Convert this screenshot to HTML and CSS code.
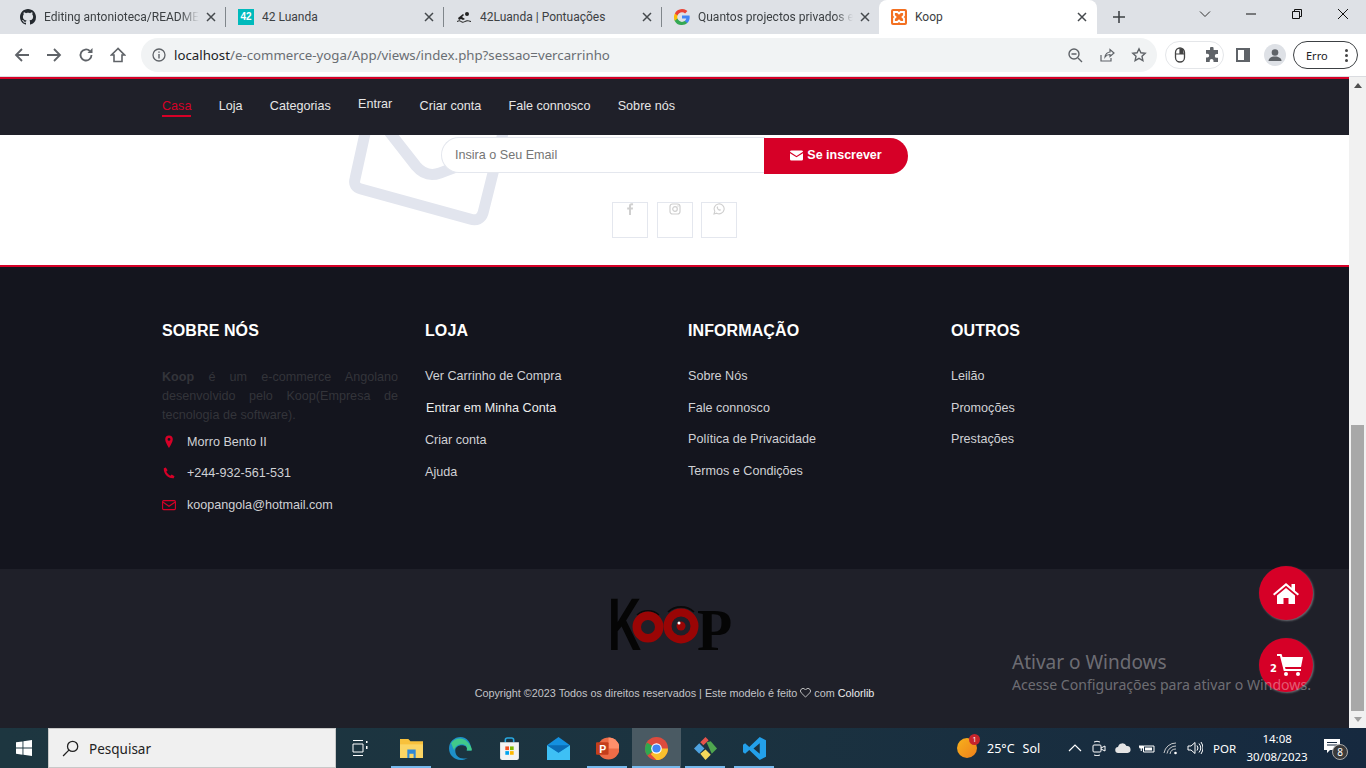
FILE: index.html
```html
<!DOCTYPE html>
<html lang="pt">
<head>
    <meta charset="UTF-8">
    <meta name="viewport" content="width=device-width, initial-scale=1.0">
    <title>Koop</title>
    <link rel="stylesheet" href="styles.css">
</head>
<body>
  <div id="tabstrip">
    <div class="tab">
      <svg class="favicon" viewBox="0 0 16 16"><path fill="#24292f" d="M8 0C3.58 0 0 3.58 0 8c0 3.54 2.29 6.53 5.47 7.59.4.07.55-.17.55-.38 0-.19-.01-.82-.01-1.49-2.01.37-2.53-.49-2.69-.94-.09-.23-.48-.94-.82-1.13-.28-.15-.68-.52-.01-.53.63-.01 1.08.58 1.23.82.72 1.21 1.87.87 2.33.66.07-.52.28-.87.51-1.07-1.78-.2-3.64-.89-3.64-3.95 0-.87.31-1.59.82-2.15-.08-.2-.36-1.02.08-2.12 0 0 .67-.21 2.2.82.64-.18 1.32-.27 2-.27.68 0 1.36.09 2 .27 1.53-1.04 2.2-.82 2.2-.82.44 1.1.16 1.92.08 2.12.51.56.82 1.27.82 2.15 0 3.07-1.87 3.75-3.65 3.95.29.25.54.73.54 1.48 0 1.07-.01 1.93-.01 2.2 0 .21.15.46.55.38A8.013 8.013 0 0016 8c0-4.42-3.58-8-8-8z"/></svg>
      <span class="tab-title fade">Editing antonioteca/README.md</span>
      <svg class="tab-close" viewBox="0 0 10 10"><path d="M1 1l8 8M9 1L1 9"/></svg>
    </div>
    <div class="tab">
      <span class="favicon icon-42">42</span>
      <span class="tab-title">42 Luanda</span>
      <svg class="tab-close" viewBox="0 0 10 10"><path d="M1 1l8 8M9 1L1 9"/></svg>
    </div>
    <div class="tab">
      <svg class="favicon" viewBox="0 0 16 16" fill="#222"><circle cx="11" cy="5" r="2"/><path d="M2 9l5-4 1 1-2 2 3 2-2 1-2-1-2 1zM1 12c2-1 3-1 4 0s3 1 4 0 3-1 6 0v1c-3-1-4-1-6 0s-3 1-4 0-2-1-4 0z"/></svg>
      <span class="tab-title">42Luanda | Pontuações</span>
      <svg class="tab-close" viewBox="0 0 10 10"><path d="M1 1l8 8M9 1L1 9"/></svg>
    </div>
    <div class="tab tab-last">
      <svg class="favicon" viewBox="0 0 16 16"><path fill="#4285f4" d="M15.7 8.2c0-.6-.1-1.100-.2-1.600H8v3h4.300a3.700 3.700 0 0 1-1.600 2.400v2h2.600c1.500-1.400 2.400-3.400 2.400-5.800z"/><path fill="#34a853" d="M8 16c2.200 0 4-.7 5.300-1.900l-2.600-2c-.7.500-1.600.8-2.700.8-2.100 0-3.800-1.400-4.500-3.300H.6v2.100A8 8 0 0 0 8 16z"/><path fill="#fbbc05" d="M3.500 9.600a4.800 4.800 0 0 1 0-3.100V4.400H.9a8 8 0 0 0 0 7.300z"/><path fill="#ea4335" d="M8 3.200c1.200 0 2.200.4 3.100 1.200l2.300-2.300A8 8 0 0 0 .9 4.400l2.600 2.100C4.200 4.600 5.900 3.200 8 3.200z"/></svg>
      <span class="tab-title fade">Quantos projectos privados e públicos</span>
      <svg class="tab-close" viewBox="0 0 10 10"><path d="M1 1l8 8M9 1L1 9"/></svg>
    </div>
    <div class="tab tab-active">
      <svg class="favicon" viewBox="0 0 16 16"><rect width="16" height="16" rx="2" fill="#f37021"/><path fill="none" stroke="#fff" stroke-width="1.800" d="M3 3h3.500L8 4.500 9.500 3H13v3.500L11.500 8 13 9.500V13H9.500L8 11.500 6.500 13H3V9.500L4.500 8 3 6.500z"/></svg>
      <span class="tab-title">Koop</span>
      <svg class="tab-close" viewBox="0 0 10 10"><path d="M1 1l8 8M9 1L1 9"/></svg>
    </div>
    <div class="new-tab">
      <svg class="new-tab-icon" viewBox="0 0 14 14"><path d="M7 0v14M0 7h14" stroke="#3c4043" stroke-width="1.800"/></svg>
    </div>
    <div class="window-btns">
      <svg class="win-btn" viewBox="0 0 12 12"><path d="M1 3.500l5 5 5-5" fill="none" stroke="#333"/></svg>
      <svg class="win-btn" viewBox="0 0 12 12"><path d="M1 6h10" stroke="#111"/></svg>
      <svg class="win-btn" viewBox="0 0 12 12"><path d="M1.500 3.500h7v7h-7zM3.500 3.500v-2h7v7h-2" fill="none" stroke="#111"/></svg>
      <svg class="win-btn" viewBox="0 0 12 12"><path d="M1 1l10 10M11 1L1 11" stroke="#111"/></svg>
    </div>
  </div>

  <div id="toolbar">
    <div class="nav-icons">
      <svg class="tool-icon" viewBox="0 0 16 16"><path d="M15 8H2M8 2L2 8l6 6" fill="none" stroke="#5f6368" stroke-width="1.800"/></svg>
      <svg class="tool-icon" viewBox="0 0 16 16"><path d="M1 8h13M8 2l6 6-6 6" fill="none" stroke="#5f6368" stroke-width="1.800"/></svg>
      <svg class="tool-icon" viewBox="0 0 16 16"><path d="M13.500 8a5.500 5.500 0 1 1-1.700-4" fill="none" stroke="#5f6368" stroke-width="1.800"/><path d="M14.500 1v5h-5z" fill="#5f6368"/></svg>
      <svg class="tool-icon" viewBox="0 0 16 16"><path d="M8 1.500L1.500 8H4v6.500h8V8h2.500z" fill="none" stroke="#5f6368" stroke-width="1.600"/></svg>
    </div>
    <div id="address-bar">
      <svg class="info-icon" viewBox="0 0 14 14"><circle cx="7" cy="7" r="6" fill="none" stroke="#5f6368" stroke-width="1.300"/><path d="M7 6v4.500M7 3.500v1.300" stroke="#5f6368" stroke-width="1.400"/></svg>
      <span class="url"><span class="url-host">localhost</span>/e-commerce-yoga/App/views/index.php?sessao=vercarrinho</span>
      <div class="address-icons">
        <svg class="tool-icon" viewBox="0 0 16 16"><circle cx="7" cy="7" r="5" fill="none" stroke="#5f6368" stroke-width="1.400"/><path d="M4.500 7h5M11 11l4 4" stroke="#5f6368" stroke-width="1.400"/></svg>
        <svg class="tool-icon" viewBox="0 0 16 16"><path d="M2 8v6h10v-3M6 10c0-3 3-5 5-5V2.500L15 6l-4 3.500V7.500C9 7.500 7 8.500 6 10z" fill="none" stroke="#5f6368" stroke-width="1.200"/></svg>
        <svg class="tool-icon" viewBox="0 0 16 16"><path d="M8 1.800l1.900 4 4.300.5-3.200 3 .9 4.300L8 11.400l-3.900 2.200.9-4.300-3.200-3 4.300-.5z" fill="none" stroke="#5f6368" stroke-width="1.400"/></svg>
      </div>
    </div>
    <div class="ext-pill">
      <svg class="tool-icon" viewBox="0 0 16 16"><rect x="3.500" y="1" width="9" height="14" rx="4.500" fill="none" stroke="#444" stroke-width="1.300"/><path d="M3.500 7h9M8 1v6" stroke="#444" stroke-width="1.200"/><rect x="8" y="2" width="3.500" height="5" fill="#444"/></svg>
      <svg class="tool-icon" viewBox="0 0 16 16"><path fill="#5f6368" d="M6 1.500a1.800 1.800 0 0 1 3.600 0V3H14v4h-1.300a1.900 1.900 0 0 0 0 3.800H14V15H9.500v-1.200a1.900 1.900 0 0 0-3.800 0V15H2v-4.500h1.300a1.900 1.900 0 0 0 0-3.800H2V3h4z"/></svg>
    </div>
    <svg class="panel-icon" viewBox="0 0 14 14"><rect x="1" y="1" width="12" height="12" fill="none" stroke="#5f6368" stroke-width="2"/><rect x="8" y="1" width="5" height="12" fill="#5f6368"/></svg>
    <svg class="avatar" viewBox="0 0 22 22"><circle cx="11" cy="11" r="11" fill="#dee1e6"/><circle cx="11" cy="8.500" r="3.300" fill="#5f6368"/><path d="M4.500 17c0-3 3-4.500 6.500-4.500s6.500 1.500 6.500 4.500z" fill="#5f6368"/></svg>
    <div class="error-pill">Erro <span class="dots"><i></i><i></i><i></i></span></div>
  </div>

  <div id="viewport">
    <div id="page">
      <nav id="main-nav">
        <a class="nav-link active">Casa</a>
        <a class="nav-link">Loja</a>
        <a class="nav-link">Categorias</a>
        <a class="nav-link nav-raised">Entrar</a>
        <a class="nav-link">Criar conta</a>
        <a class="nav-link">Fale connosco</a>
        <a class="nav-link">Sobre nós</a>
      </nav>

      <section id="newsletter">
        <svg class="news-bg" viewBox="0 0 180 110"><path d="M33-38L15 44q-2 8 6 10l109 30q10 3 13-6l27-108M40-15l36 46q10 12 24 7l70-26" fill="none" stroke="#e2e5ee" stroke-width="11"/></svg>
        <form id="news-form">
          <input class="news-input" type="text" placeholder="Insira o Seu Email">
          <button class="news-btn" type="button">
            <svg class="news-btn-icon" viewBox="0 0 14 11"><path d="M0 1.500Q0 0 1.500 0h11Q14 0 14 1.500L7 6zM0 3l7 4.500L14 3v6.500q0 1.500-1.500 1.500h-11Q0 11 0 9.500z" fill="#fff"/></svg>
            Se inscrever
          </button>
        </form>
        <div class="social">
          <div class="social-box">
            <svg class="social-icon" viewBox="0 0 12 12"><path d="M7 12V6.500h1.800L9 4.500H7V3.300c0-.6.200-1 1-1h1.100V.4C8.800.3 8.300.3 7.700.3 6 .3 5 1.200 5 3v1.500H3.200v2H5V12z" fill="#cfcfcf"/></svg>
          </div>
          <div class="social-box">
            <svg class="social-icon" viewBox="0 0 12 12"><rect x="1" y="1" width="10" height="10" rx="2.500" fill="none" stroke="#cfcfcf" stroke-width="1.200"/><circle cx="6" cy="6" r="2.300" fill="none" stroke="#cfcfcf" stroke-width="1.200"/><circle cx="9" cy="3" r=".7" fill="#cfcfcf"/></svg>
          </div>
          <div class="social-box social-box-last">
            <svg class="social-icon" viewBox="0 0 12 12"><path d="M1 11l.8-2.700a5 5 0 1 1 1.900 1.900z" fill="none" stroke="#cfcfcf" stroke-width="1.100"/><path d="M4.200 3.500c-.8.600-.6 1.700.4 2.900 1 1.100 2.200 1.700 3 1.100l.4-.8-1.200-.7-.5.500c-.7-.3-1.200-.9-1.500-1.500l.4-.5-.6-1.200z" fill="#cfcfcf"/></svg>
          </div>
        </div>
      </section>

      <footer id="footer">
        <div class="footer-col">
          <h4 class="footer-title">Sobre nós</h4>
          <p class="footer-about"><b>Koop</b> é um e-commerce Angolano desenvolvido pelo Koop(Empresa de tecnologia de software).</p>
          <div class="contact-row">
            <svg class="contact-icon" viewBox="0 0 14 14"><path fill-rule="evenodd" d="M7 .5a3.800 3.800 0 0 0-3.800 3.800C3.200 7.300 7 13 7 13s3.800-5.700 3.800-8.700A3.800 3.800 0 0 0 7 .5zm0 2.500a1.400 1.400 0 1 1 0 2.800A1.400 1.400 0 0 1 7 3z" fill="#d60027"/></svg>
            <span>Morro Bento II</span>
          </div>
          <div class="contact-row">
            <svg class="contact-icon" viewBox="0 0 14 14"><path d="M3.800 1.500L1.800 2.300C1.400 8 6 12.600 11.700 12.200l.8-2-2.800-1.800-1.400 1.300C6.900 9 5 7.100 4.300 5.700l1.300-1.400z" fill="#d60027"/></svg>
            <span>+244-932-561-531</span>
          </div>
          <div class="contact-row">
            <svg class="contact-icon" viewBox="0 0 14 14"><rect x=".6" y="2.600" width="12.800" height="9" rx="1" fill="none" stroke="#d60027" stroke-width="1.100"/><path d="M.8 4l6.200 4.300L13.200 4" fill="none" stroke="#d60027" stroke-width="1.100"/></svg>
            <span>koopangola@hotmail.com</span>
          </div>
        </div>
        <div class="footer-col">
          <h4 class="footer-title">Loja</h4>
          <a class="footer-link">Ver Carrinho de Compra</a>
          <a class="footer-link footer-link-hl">Entrar em Minha Conta</a>
          <a class="footer-link">Criar conta</a>
          <a class="footer-link">Ajuda</a>
        </div>
        <div class="footer-col">
          <h4 class="footer-title">Informação</h4>
          <a class="footer-link">Sobre Nós</a>
          <a class="footer-link">Fale connosco</a>
          <a class="footer-link">Política de Privacidade</a>
          <a class="footer-link">Termos e Condições</a>
        </div>
        <div class="footer-col">
          <h4 class="footer-title">Outros</h4>
          <a class="footer-link">Leilão</a>
          <a class="footer-link">Promoções</a>
          <a class="footer-link">Prestações</a>
        </div>
      </footer>

      <div id="copyright">
        <svg class="koop-logo" viewBox="0 0 124 60">
          <text class="logo-k" transform="translate(-3 54) scale(.62 1)">K</text>
          <path d="M26 19a16.500 16.500 0 0 1 22 0M57 16a19 19 0 0 1 26 0" fill="none" stroke="#0a0a0a" stroke-width="1.600"/>
          <circle cx="37" cy="31" r="11.250" fill="#1f2029" stroke="#9a0505" stroke-width="8.500"/>
          <circle cx="70" cy="30" r="13.500" fill="#1f2029" stroke="#9a0505" stroke-width="8"/>
          <circle cx="70" cy="30" r="4.500" fill="#9a0505"/>
          <circle cx="68" cy="27" r="1.500" fill="#fff"/>
          <text class="logo-p" transform="translate(86 54) scale(.96 1)">P</text>
        </svg>
        <p class="copy-text">Copyright ©2023 Todos os direitos reservados | Este modelo é feito <svg class="heart" viewBox="0 0 12 11"><path d="M6 10L1.300 5.300a2.800 2.800 0 0 1 4-4L6 2l.7-.7a2.800 2.800 0 0 1 4 4z" fill="none" stroke="#ccc"/></svg> com <a class="copy-link">Colorlib</a></p>
      </div>

      <div class="float-btns">
        <a class="float-btn">
          <svg class="float-home" viewBox="0 0 26 22"><path d="M13 1L0 12l1.300 1.500L13 3.800l11.700 9.700L26 12l-4-3.300V2h-3.500v3.800z" fill="#fff"/><path d="M13 6L4 13.500V22h6.500v-6h5v6H22v-8.500z" fill="#fff"/></svg>
        </a>
        <a class="float-btn">
          <span class="cart-count">2</span>
          <svg class="float-cart" viewBox="0 0 26 22"><path d="M0 0h4.500l1 3H26l-2 10H8l.5 2H24v2H6.800L3 2H0z" fill="#fff"/><circle cx="9" cy="20" r="2" fill="#fff"/><circle cx="21" cy="20" r="2" fill="#fff"/></svg>
        </a>
      </div>
    </div>

    <div id="scrollbar">
      <span class="scroll-arrow arrow-up"></span>
      <div class="scroll-track"><div class="scroll-thumb"></div></div>
      <span class="scroll-arrow arrow-down"></span>
    </div>

    <div class="activate">
      <div class="activate-title">Ativar o Windows</div>
      <div class="activate-sub">Acesse Configurações para ativar o Windows.</div>
    </div>
  </div>

  <div id="taskbar">
    <div class="start">
      <svg class="start-icon" viewBox="0 0 16 16"><path fill="#fff" d="M0 2.300l6.500-.9v6.200H0zM7.400 1.300L16 0v7.600H7.400zM0 8.500h6.500v6.200L0 13.800zM7.400 8.500H16V16l-8.600-1.200z"/></svg>
    </div>
    <div class="search">
      <svg class="search-icon" viewBox="0 0 16 16"><circle cx="10" cy="6" r="4.800" fill="none" stroke="#222" stroke-width="1.200"/><path d="M6.500 9.500L1 15" stroke="#222" stroke-width="1.200"/></svg>
      <span>Pesquisar</span>
    </div>
    <div class="task-view">
      <svg class="task-icon" viewBox="0 0 16 16"><path d="M1 .5h10M1 15.500h10M1 4h10v8H1z" fill="none" stroke="#fff"/><path d="M14 1h1.500v2H14zM14 6h1.500v3H14z" fill="#fff"/></svg>
    </div>
    <div class="task-apps">
      <div class="app app-open">
        <svg class="app-icon" viewBox="0 0 22 22"><path d="M0 2h8l2 2h12v16H0z" fill="#f8c13c"/><path d="M0 7h22v13H0z" fill="#fbd564"/><path d="M7 12h8v8h-2v-4H9v4H7z" fill="#2f88d6"/></svg>
      </div>
      <div class="app">
        <svg class="app-icon" viewBox="0 0 22 22"><path d="M11 0a11 11 0 0 0-11 11c0 6 5 11 11 11 3 0 5-1 7-2-7 2-12-1-12-7 0-3 3-5 6-5 4 0 6 2 5 5h4c1-7-4-13-10-13z" fill="#1e90c9"/><path d="M2 6c3-5 11-6 15-2 3 3 5 6 5 9h-5c1-4-1-6-5-6-4 0-7 3-7 6C4 11 3 8 2 6z" fill="#41c98a"/></svg>
      </div>
      <div class="app">
        <svg class="app-icon" viewBox="0 0 22 22"><path d="M7 5V3q0-2 2-2h4q2 0 2 2v2" fill="none" stroke="#29a8e0" stroke-width="1.500"/><path d="M2 5h18v15q0 2-2 2H4q-2 0-2-2z" fill="#f3f3f3"/><path d="M7 9h3.500v3.500H7z" fill="#f25022"/><path d="M11.500 9H15v3.500h-3.500z" fill="#7fba00"/><path d="M7 13.500h3.500V17H7z" fill="#00a4ef"/><path d="M11.500 13.500H15V17h-3.500z" fill="#ffb900"/></svg>
      </div>
      <div class="app">
        <svg class="app-icon" viewBox="0 0 22 22"><path d="M0 8L11 0l11 8v14H0z" fill="#1490df"/><path d="M0 8l11 7 11-7v14H0z" fill="#3ec0f5"/><path d="M0 8h22l-11 7z" fill="#0a6cb5"/></svg>
      </div>
      <div class="app app-open">
        <svg class="app-icon" viewBox="0 0 22 22"><circle cx="12" cy="11" r="10.500" fill="#ed6c47"/><path d="M12 .5A10.500 10.500 0 0 1 22.500 11H12z" fill="#ff8f6b"/><rect x="0" y="5" width="12" height="12" rx="1" fill="#c43e1c"/><text class="ppt-letter" x="3" y="15">P</text></svg>
      </div>
      <div class="app app-open app-active">
        <svg class="app-icon" viewBox="0 0 24 24"><circle cx="12" cy="12" r="12" fill="#dd4b3e"/><path d="M12 12L1.600 18A12 12 0 0 1 3 4.500z" fill="#2fa84f" transform="rotate(-8 12 12)"/><path d="M12 12h12a12 12 0 0 1-12 12l-6-6z" fill="#fbc02d"/><circle cx="12" cy="12" r="5.500" fill="#fff"/><circle cx="12" cy="12" r="4.300" fill="#4285f4"/></svg>
      </div>
      <div class="app app-open">
        <svg class="app-icon" viewBox="0 0 22 22"><path d="M6 5l5-5 3 3-5 5z" fill="#e5534b"/><path d="M0 11l5-5 5 5-5 5z" fill="#4ea3e0"/><path d="M12 5l4-1 6 7-5 5z" fill="#4fa64f"/><path d="M6 16l5-4 5 5-5 5z" fill="#f5d85a"/></svg>
      </div>
      <div class="app app-open">
        <svg class="app-icon" viewBox="0 0 22 22"><path d="M16 0l6 3v16l-6 3-10-9.500L2 16l-2-1.500v-7L2 6l4 3.500zM16 6l-6 5 6 5z" fill="#23a0ea"/></svg>
      </div>
    </div>
    <div class="tray">
      <div class="weather">
        <span class="sun"><span class="sun-badge">1</span></span>
        <span class="temp">25°C</span>
        <span class="temp">Sol</span>
      </div>
      <svg class="tray-icon" viewBox="0 0 16 16"><path d="M2 11l6-6 6 6" fill="none" stroke="#fff" stroke-width="1.200"/></svg>
      <svg class="tray-icon" viewBox="0 0 16 16"><rect x="2" y="5" width="8" height="7" rx="1" fill="none" stroke="#fff"/><path d="M10 8l4-2v5l-4-2M3 2q3-1.500 6 0M3 15q3 1.500 6 0" fill="none" stroke="#fff"/></svg>
      <svg class="tray-icon" viewBox="0 0 16 16"><path d="M3.500 13a3 3 0 0 1-.5-6 4.500 4.500 0 0 1 8.500-1 3.500 3.500 0 0 1 1 7z" fill="#e4e4e4"/></svg>
      <svg class="tray-icon" viewBox="0 0 16 16"><path d="M4.500 6H15v6H4.500z" fill="none" stroke="#fff"/><path d="M6 7.500h7v3H6zM1 2.500v3M3.500 2.500v3M0 5.500h4.500V7q0 1.500-1.700 1.500V11H1.700V8.500Q0 8.500 0 7z" fill="#fff"/></svg>
      <svg class="tray-icon" viewBox="0 0 16 16"><path d="M1 13a12 12 0 0 1 12-10M4 13.500a9 9 0 0 1 9-7.500M7 14a6 6 0 0 1 6-5" fill="none" stroke="#ddd" stroke-width=".9"/><circle cx="12.500" cy="13" r="1.300" fill="#fff"/></svg>
      <svg class="tray-icon" viewBox="0 0 16 16"><path d="M1 6h3l4-3.500v11L4 10H1zM10 5.500q2 2.500 0 5M12 3.500q3.500 4.500 0 9M14 2q4 6 0 12" fill="none" stroke="#fff"/></svg>
      <span class="lang">POR</span>
      <div class="clock"><span>14:08</span><span>30/08/2023</span></div>
      <div class="notif">
        <svg class="notif-icon" viewBox="0 0 16 14"><path d="M0 0h16v11H6l-3 3v-3H0z" fill="#fff"/><path d="M3 3.500h10M3 6h10" stroke="#16293f"/></svg>
        <span class="notif-badge">8</span>
      </div>
    </div>
  </div>
</body>
</html>
```
FILE: styles.css
```css
* {
  box-sizing: border-box;
}

body {
  margin: 0;
  width: 1366px;
  height: 768px;
  overflow: hidden;
  display: flex;
  flex-direction: column;
  font-family: "Liberation Sans", sans-serif;
  background-color: #1f2029;
}

/* browser chrome */
#tabstrip {
  height: 34px;
  flex: none;
  display: flex;
  padding-left: 8px;
  background-color: #dee1e6;
  font-family: Roboto, sans-serif;
  font-size: 12px;
  color: #3c4043;
}

.tab {
  width: 218px;
  display: flex;
  align-items: center;
  padding-left: 12px;
  position: relative;
}

/* separator between tabs */
.tab::after {
  content: "";
  position: absolute;
  right: 0;
  top: 7px;
  height: 20px;
  width: 1px;
  background-color: #80868b;
}

.tab-last::after,
.tab-active::after {
  display: none;
}

.tab-active {
  margin-left: -1px;
  background-color: #fff;
  border-radius: 8px 8px 0 0;
}

.favicon {
  width: 16px;
  height: 16px;
  flex: none;
}

.icon-42 {
  background-color: #00babc;
  color: #fff;
  font-family: "Liberation Sans", sans-serif;
  font-size: 10px;
  font-weight: bold;
  line-height: 16px;
  text-align: center;
}

.tab-title {
  margin-left: 8px;
  width: 155px;
  white-space: nowrap;
  overflow: hidden;
}

.fade {
  -webkit-mask-image: linear-gradient(to right, #000 88%, transparent);
  mask-image: linear-gradient(to right, #000 88%, transparent);
}

.tab-close {
  width: 10px;
  height: 10px;
  margin-left: 7px;
  fill: none;
  stroke: #45494d;
  stroke-width: 1.500;
}

.new-tab {
  width: 44px;
  display: flex;
  align-items: center;
  justify-content: center;
}

.new-tab-icon {
  width: 12px;
  height: 12px;
}

.window-btns {
  margin-left: 58px;
  display: flex;
  gap: 34px;
  padding-top: 8px;
}

.win-btn {
  width: 12px;
  height: 12px;
}

#toolbar {
  height: 43px;
  flex: none;
  display: flex;
  align-items: center;
  background-color: #fff;
  border-bottom: 1px solid #dadce0;
  font-family: "Noto Sans", sans-serif;
}

.nav-icons {
  width: 141px;
  flex: none;
  display: flex;
  gap: 16px;
  padding-left: 14px;
}

.tool-icon {
  width: 16px;
  height: 16px;
  flex: none;
}

#address-bar {
  width: 1016px;
  height: 34px;
  flex: none;
  display: flex;
  align-items: center;
  padding-left: 11px;
  background-color: #f1f3f4;
  border-radius: 17px;
}

.info-icon {
  width: 14px;
  height: 14px;
  flex: none;
}

.url {
  margin-left: 8px;
  font-size: 13.250px;
  color: #6a6e73;
  white-space: nowrap;
}

.url-host {
  color: #202124;
}

.address-icons {
  margin-left: auto;
  display: flex;
  gap: 16px;
  padding-right: 10px;
}

.ext-pill {
  width: 59px;
  height: 28px;
  flex: none;
  margin-left: 8px;
  display: flex;
  align-items: center;
  gap: 16px;
  padding-left: 6px;
  border: 1px solid #e4e6e9;
  border-radius: 14px;
}

.panel-icon {
  width: 14px;
  height: 14px;
  flex: none;
  margin-left: 12px;
}

.avatar {
  width: 22px;
  height: 22px;
  flex: none;
  margin-left: 14px;
}

.error-pill {
  width: 65px;
  height: 28px;
  flex: none;
  margin-left: 7px;
  display: flex;
  align-items: center;
  justify-content: space-between;
  padding: 0 9px 0 12px;
  border: 1px solid #3c4043;
  border-radius: 14px;
  font-size: 11px;
  color: #202124;
}

.dots {
  display: flex;
  flex-direction: column;
  gap: 2px;
}

.dots i {
  width: 3px;
  height: 3px;
  background-color: #444;
  border-radius: 50%;
}

/* page */
#viewport {
  flex: 1;
  min-height: 0;
  display: flex;
  position: relative;
}

#page {
  width: 1349px;
  flex: none;
  display: flex;
  flex-direction: column;
  position: relative;
  overflow: hidden;
}

#main-nav {
  height: 58px;
  flex: none;
  display: flex;
  align-items: flex-start;
  gap: 27.300px;
  padding: 20px 0 0 162px;
  background-color: #1f2029;
  border-top: 2px solid #d60027;
}

.nav-link {
  font-size: 12.600px;
  line-height: 15px;
  color: #e6e6e6;
  padding-bottom: 1px;
  border-bottom: 2px solid transparent;
}

.nav-link.active {
  color: #d60027;
  border-bottom-color: #d60027;
}

.nav-raised {
  margin-top: -2px;
}

#newsletter {
  height: 130px;
  flex: none;
  display: flex;
  flex-direction: column;
  align-items: center;
  position: relative;
  overflow: hidden;
  background-color: #fff;
}

.news-bg {
  position: absolute;
  left: 340px;
  top: 0;
  width: 180px;
  height: 110px;
}

#news-form {
  width: 467px;
  display: flex;
  margin-top: 2px;
  position: relative;
}

.news-input {
  width: 324px;
  height: 36px;
  padding: 0 0 1px 13px;
  background-color: #fff;
  border: 1px solid #e4e7ee;
  border-right: none;
  border-radius: 18px 0 0 18px;
  font-family: "Liberation Sans", sans-serif;
  font-size: 12.600px;
  outline: none;
}

.news-btn {
  width: 144px;
  height: 36px;
  margin: 1px 0 0 -1px;
  padding: 0 0 2px;
  display: flex;
  align-items: center;
  justify-content: center;
  gap: 4px;
  border: none;
  border-radius: 0 18px 18px 0;
  background-color: #d60027;
  color: #fff;
  font-family: "Liberation Sans", sans-serif;
  font-size: 12.500px;
  font-weight: bold;
}

.news-btn-icon {
  width: 13px;
  height: 11px;
}

.social {
  display: flex;
  margin-top: 28px;
  gap: 9px;
}

.social-box {
  width: 36px;
  height: 36px;
  display: flex;
  justify-content: center;
  border: 1px solid #e4e7ee;
}

.social-box-last {
  margin-left: -1px;
}

.social-icon {
  width: 12px;
  height: 12px;
}

#footer {
  height: 304px;
  flex: none;
  display: grid;
  grid-template-columns: repeat(4, 263px);
  padding: 55px 0 0 162px;
  background-color: #14151e;
  border-top: 2px solid #d60027;
}

.footer-col {
  display: flex;
  flex-direction: column;
  align-items: flex-start;
}

.footer-title {
  margin: 0 0 29px;
  font-size: 16px;
  line-height: 18px;
  font-weight: bold;
  letter-spacing: 0.1px;
  text-transform: uppercase;
  color: #fff;
}

.footer-about {
  width: 236px;
  margin: -1px 0 9px;
  font-size: 12.600px;
  line-height: 19px;
  text-align: justify;
  color: #33343a;
}

.contact-row {
  display: flex;
  align-items: center;
  height: 15px;
  margin-bottom: 16.500px;
  font-size: 12.600px;
  color: #d0d1d5;
}

.contact-icon {
  width: 14px;
  height: 14px;
  flex: none;
  margin-right: 11px;
}

.footer-link {
  font-size: 12.600px;
  line-height: 15px;
  margin-bottom: 16.500px;
  color: #d0d1d5;
}

.footer-link-hl {
  margin-left: 1px;
  margin-bottom: 17.500px;
  color: #eceded;
}

#copyright {
  flex: 1;
  display: flex;
  flex-direction: column;
  align-items: center;
  background-color: #1f2029;
}

.koop-logo {
  width: 124px;
  height: 60px;
  margin: 27px 0 0 -3px;
  overflow: visible;
}

.logo-k {
  font-family: "Liberation Sans", sans-serif;
  font-size: 74px;
  font-weight: bold;
  fill: #050505;
}

.logo-p {
  font-family: "Liberation Serif", serif;
  font-size: 60px;
  font-weight: bold;
  fill: #050505;
}

.copy-text {
  margin: 31px 0 0;
  font-size: 10.800px;
  line-height: 13px;
  color: #c3c4c8;
}

.heart {
  width: 11px;
  height: 10px;
  vertical-align: -1px;
}

.copy-link {
  color: #eceded;
}

.float-btns {
  position: absolute;
  right: 36px;
  bottom: 36px;
  display: flex;
  flex-direction: column;
  gap: 18px;
}

.float-btn {
  width: 54px;
  height: 54px;
  display: flex;
  align-items: center;
  justify-content: center;
  position: relative;
  border-radius: 50%;
  background-color: #d60027;
  box-shadow: 1px 1px 2px rgba(255, 255, 255, 0.35);
}

.float-home {
  width: 26px;
  height: 22px;
}

.float-cart {
  width: 26px;
  height: 22px;
  margin-left: 8px;
}

.cart-count {
  position: absolute;
  left: 11px;
  top: 25px;
  font-family: "DejaVu Sans", sans-serif;
  font-size: 10px;
  font-weight: bold;
  color: #fff;
}

/* scrollbar */
#scrollbar {
  width: 17px;
  flex: none;
  display: flex;
  flex-direction: column;
  align-items: center;
  background-color: #f1f1f1;
}

.scroll-track {
  flex: 1;
  width: 100%;
  display: flex;
  flex-direction: column;
  justify-content: flex-end;
  align-items: center;
}

.scroll-thumb {
  width: 13px;
  height: 286px;
  background-color: #a8a8a8;
}

.scroll-arrow {
  width: 0;
  height: 0;
  margin: 6px 0;
  border-left: 4px solid transparent;
  border-right: 4px solid transparent;
}

.arrow-up {
  border-bottom: 5px solid #505050;
}

.arrow-down {
  border-top: 5px solid #a0a0a0;
}

.activate {
  position: absolute;
  left: 1012px;
  top: 573px;
  font-family: "Noto Sans", sans-serif;
  color: rgba(255, 255, 255, 0.36);
  pointer-events: none;
}

.activate-title {
  font-size: 19px;
  line-height: 24px;
}

.activate-sub {
  font-size: 14.100px;
  line-height: 22px;
}

/* taskbar */
#taskbar {
  height: 40px;
  flex: none;
  display: flex;
  background: linear-gradient(to right, #1d3640, #1b3340 50%, #16293f);
  font-family: "Noto Sans", sans-serif;
  color: #fff;
}

.start {
  width: 48px;
  flex: none;
  display: flex;
  align-items: center;
  justify-content: center;
}

.start-icon {
  width: 16px;
  height: 16px;
}

.search {
  width: 288px;
  flex: none;
  display: flex;
  align-items: center;
  gap: 10px;
  padding: 1px 0 0 13px;
  background-color: #f0f0f0;
  border: 1px solid #c8c8c8;
  font-size: 13.500px;
  color: #222;
}

.search-icon {
  width: 17px;
  height: 17px;
}

.task-view {
  width: 51px;
  flex: none;
  display: flex;
  align-items: center;
  padding-left: 16px;
}

.task-icon {
  width: 16px;
  height: 16px;
}

.task-apps {
  display: flex;
}

.app {
  width: 49px;
  height: 40px;
  display: flex;
  align-items: center;
  justify-content: center;
  position: relative;
}

.app-open::after {
  content: "";
  position: absolute;
  left: 4px;
  right: 5px;
  bottom: 0;
  height: 2px;
  background-color: #76b9ed;
}

.app-active {
  background-color: #4a5a63;
}

.app-active::after {
  left: 0;
  right: 1px;
}

.app-icon {
  width: 23px;
  height: 23px;
}

.ppt-letter {
  font-family: "Liberation Sans", sans-serif;
  font-size: 10px;
  font-weight: bold;
  fill: #fff;
}

.tray {
  flex: 1;
  display: flex;
  align-items: center;
  padding-left: 178px;
}

.weather {
  width: 110px;
  flex: none;
  display: flex;
  align-items: center;
  font-size: 12.500px;
  gap: 8px;
}

.sun {
  width: 20px;
  height: 20px;
  flex: none;
  margin-right: 2px;
  position: relative;
  border-radius: 50%;
  background: linear-gradient(135deg, #f7b21c, #ef7f1a);
}

.sun-badge {
  position: absolute;
  top: -4px;
  right: -3px;
  width: 11px;
  height: 11px;
  border-radius: 50%;
  background-color: #c8242b;
  font-size: 7px;
  line-height: 11px;
  text-align: center;
}

.tray-icon {
  width: 16px;
  height: 16px;
  flex: none;
  margin-right: 8px;
}

.lang {
  margin-left: 2px;
  font-size: 11.500px;
}

.clock {
  width: 64px;
  margin-left: 9px;
  display: flex;
  flex-direction: column;
  align-items: center;
  gap: 3px;
  margin-top: -1px;
  font-size: 11.500px;
  line-height: 15px;
}

.notif {
  margin-left: 15px;
  width: 24px;
  height: 24px;
  position: relative;
}

.notif-icon {
  width: 16px;
  height: 14px;
  display: block;
  margin-top: 3px;
}

.notif-badge {
  position: absolute;
  left: 8px;
  top: 8px;
  width: 16px;
  height: 16px;
  border-radius: 50%;
  background-color: #3a3a3a;
  border: 1px solid #aaa;
  font-size: 10px;
  line-height: 14px;
  text-align: center;
}
```
